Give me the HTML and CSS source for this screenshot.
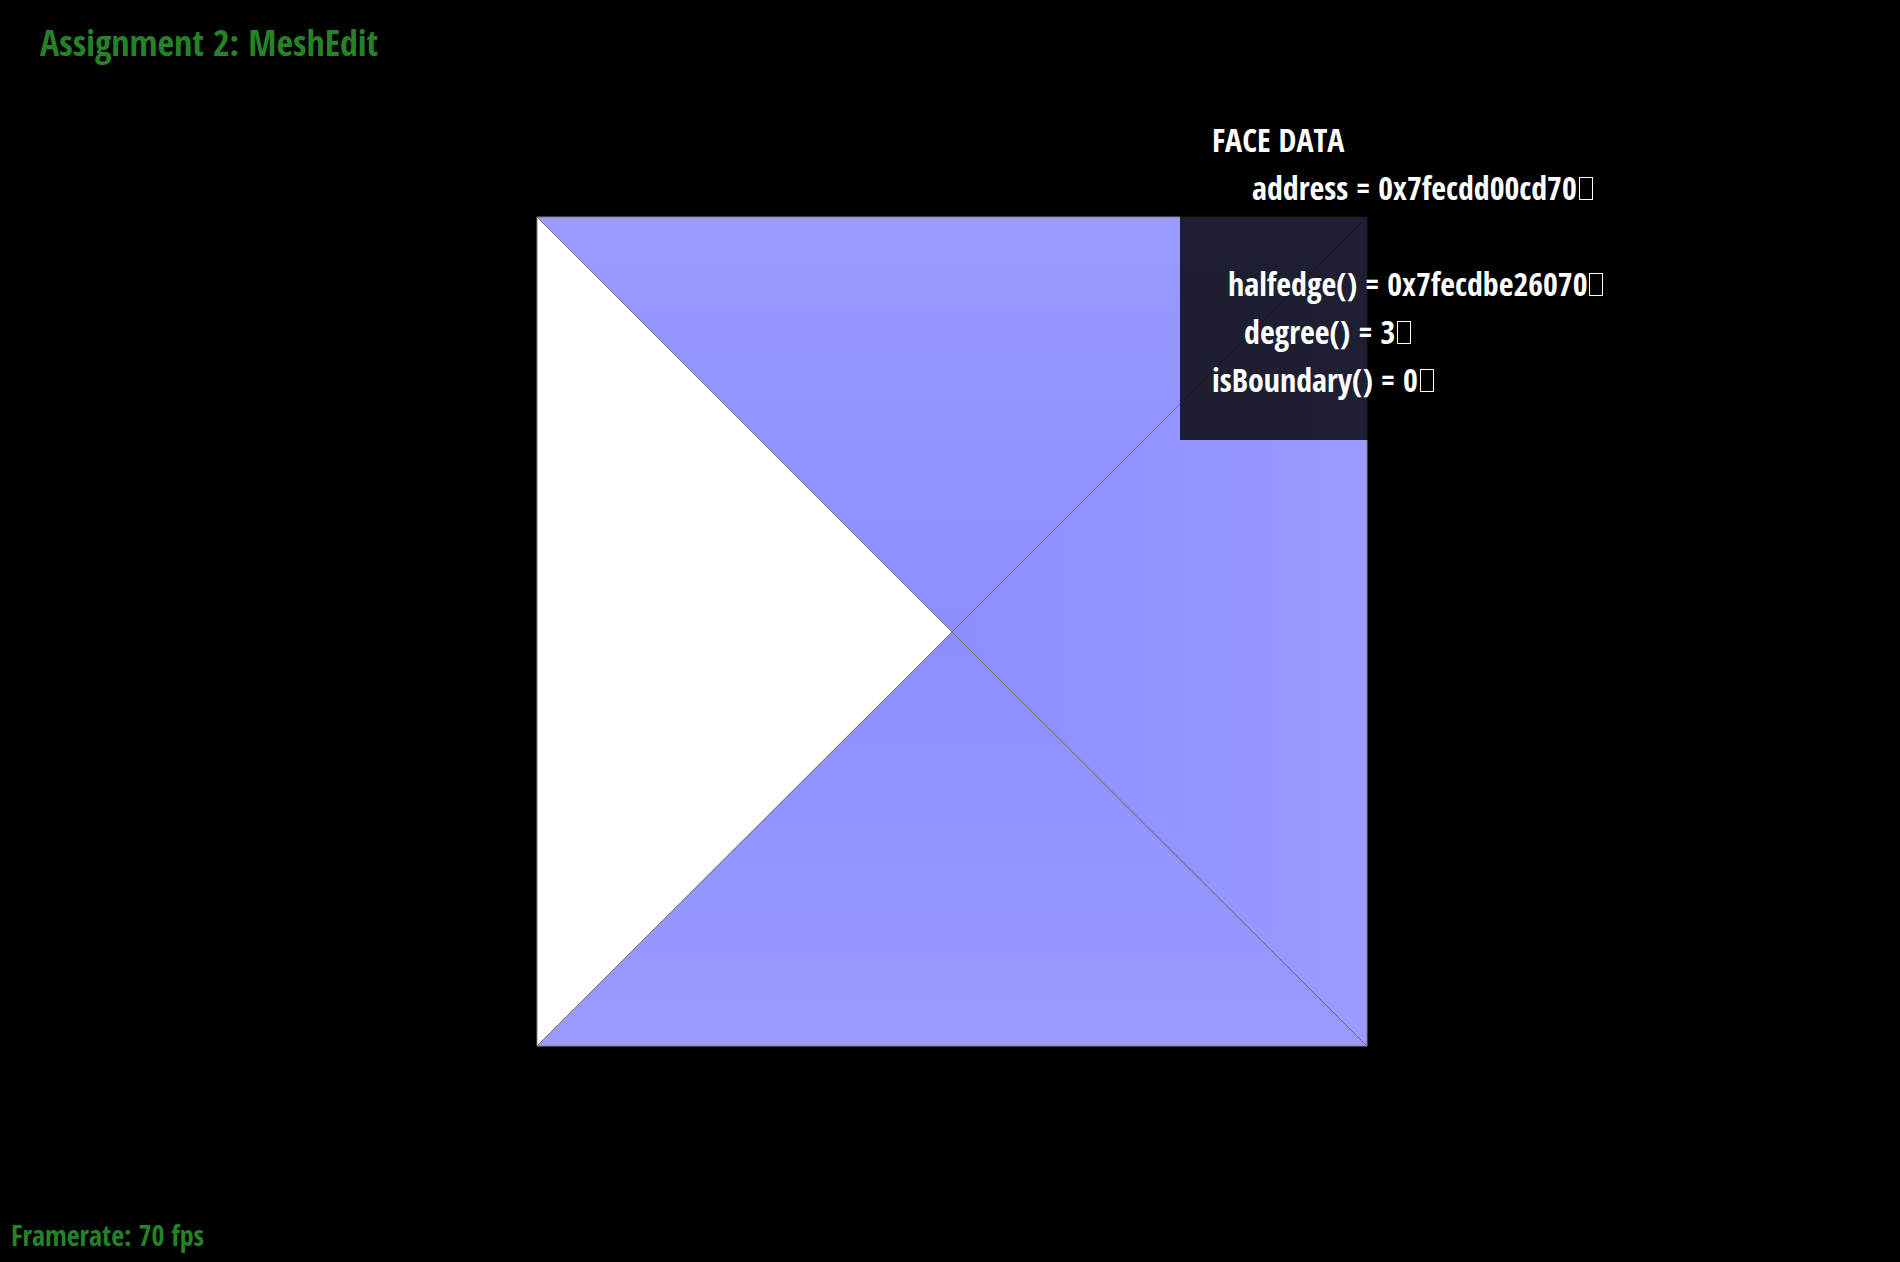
FILE: index.html
```
<!DOCTYPE html>
<html lang="en">
<head>
<meta charset="utf-8">
<title>MeshEdit</title>
<link rel="stylesheet" href="styles.css">
</head>
<body>
<div class="viewer">
  <svg class="scene" viewBox="0 0 1900 1262" role="img" aria-label="Square mesh with four triangular faces">
    <defs>
      <linearGradient id="shade-top" x1="0" y1="0" x2="0" y2="1"><stop offset="0" stop-color="#9a9aff"/><stop offset="1" stop-color="#8d8dff"/></linearGradient>
      <linearGradient id="shade-bottom" x1="0" y1="1" x2="0" y2="0"><stop offset="0" stop-color="#9a9aff"/><stop offset="1" stop-color="#8d8dff"/></linearGradient>
      <linearGradient id="shade-right" x1="1" y1="0" x2="0" y2="0"><stop offset="0" stop-color="#9a9aff"/><stop offset="1" stop-color="#8d8dff"/></linearGradient>
    </defs>
    <path fill="url(#shade-top)" d="M537 217H1367L952 632Z"/>
    <path fill="url(#shade-bottom)" d="M537 1046H1367L952 632Z"/>
    <path fill="url(#shade-right)" d="M1367 217V1046L952 632Z"/>
    <path fill="#fff" d="M537 217V1046L952 632Z"/>
    <path class="edge diagonal" d="M537 217L952 632L1367 1046M1367 217L952 632L537 1046"/>
    <path class="edge" d="M537 217H1367V1046H537Z"/>
  </svg>
  <header class="bar"><h1 class="title">Assignment 2: MeshEdit</h1></header>
  <section class="panel">
    <h2 class="line">FACE DATA</h2>
    <p class="line indent-5">address = 0x7fecdd00cd70<span class="box"></span></p>
    <p class="line"></p>
    <p class="line indent-2">halfedge() = 0x7fecdbe26070<span class="box"></span></p>
    <p class="line indent-4">degree() = 3<span class="box"></span></p>
    <p class="line">isBoundary() = 0<span class="box"></span></p>
  </section>
  <footer class="status">Framerate: 70 fps</footer>
</div>
</body>
</html>
```
FILE: styles.css
```
* { box-sizing: border-box; }
body {
  margin: 0;
  background: #000;
  color: #fff;
  font-family: "Open Sans Condensed", "Open Sans", sans-serif;
  font-weight: 700;
  font-kerning: none;
}
.viewer {
  position: relative;
  display: flex;
  flex-direction: column;
  min-height: 100vh;
}
.scene {
  position: absolute;
  inset: 0;
  width: 100%;
  height: 100%;
}
.edge {
  fill: none;
  stroke: #808080;
  stroke-width: 1;
}
.diagonal { stroke: #74746c; }
.bar, .panel, .status { position: relative; }
.bar { padding: 19px 40px; }
.title {
  margin: 0;
  color: #268226;
  font-size: 36px;
  line-height: 48px;
}
.panel {
  align-self: flex-end;
  width: 700px;
  margin: 14px 20px 0;
  padding: 16px 32px 36px;
  background: rgba(0, 0, 0, 0.8);
}
.line {
  min-height: 48px;
  margin: 0;
  font-size: 32px;
  font-weight: 700;
  line-height: 48px;
}
.indent-2 { padding-left: 16px; }
.indent-4 { padding-left: 32px; }
.indent-5 { padding-left: 40px; }
.box {
  display: inline-block;
  width: 14px;
  height: 23px;
  margin-left: 2px;
  border: 1px solid #fff;
}
.status {
  margin-top: auto;
  padding: 8px 11px 9px;
  color: #268226;
  font-size: 28px;
  line-height: 36px;
}
```
